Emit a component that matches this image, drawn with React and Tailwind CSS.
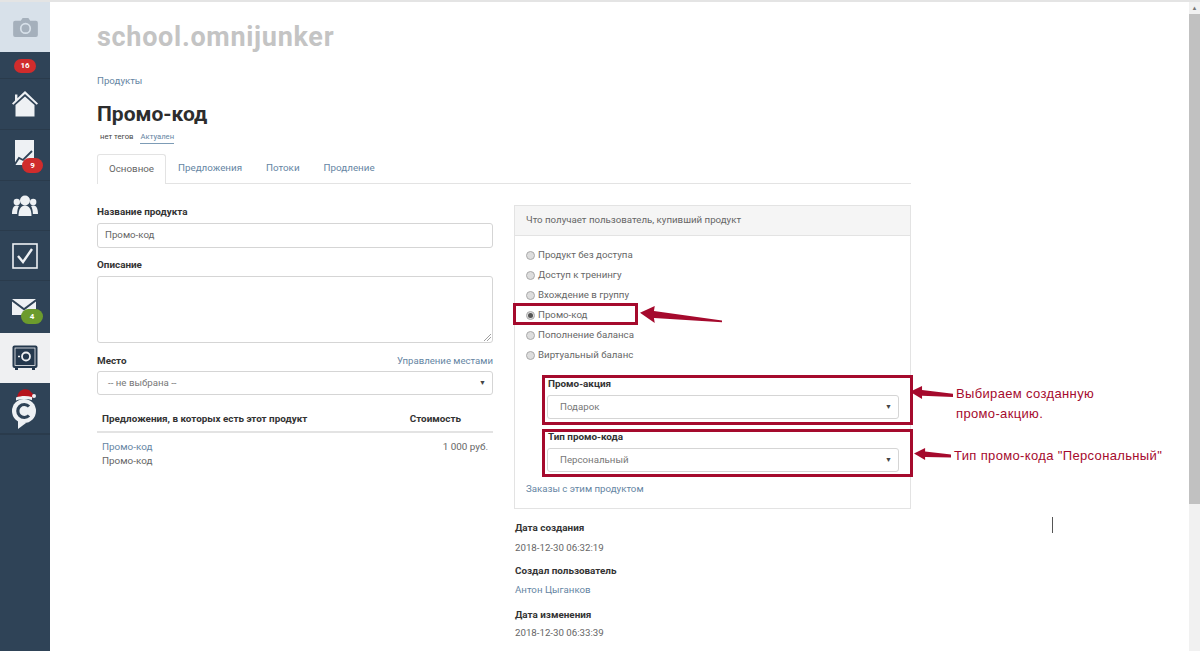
const font = { fontFamily: 'Roboto, "Liberation Sans", sans-serif' };

function Arrow({ className, d }) {
  return (
    <svg className={`absolute ${className}`} viewBox="0 0 100 20" preserveAspectRatio="none" aria-hidden="true">
      <path d={d} fill="#a50a2d" />
    </svg>
  );
}

function Badge({ children, className }) {
  return (
    <span className={`absolute flex items-center justify-center rounded-full text-[8px] font-bold text-white ${className}`}>{children}</span>
  );
}

function NavCell({ className = "", children }) {
  return <div className={`relative flex items-center justify-center border-b border-[#2a3b4c] ${className}`}>{children}</div>;
}

function Sidebar() {
  return (
    <aside className="flex w-[50px] shrink-0 flex-col bg-[#2f4357]">
      <NavCell className="h-[52px] border-b-0 bg-[#d8e1ea]">
        <svg width="25" height="19" viewBox="0 0 26 20" className="translate-y-[1px]"><path fill="#a5b0bc" d="M2 3h6l2-3h6l2 3h6a2 2 0 0 1 2 2v13a2 2 0 0 1-2 2H2a2 2 0 0 1-2-2V5a2 2 0 0 1 2-2z" /><circle cx="13" cy="11" r="5" fill="none" stroke="#d8e1ea" strokeWidth="1.8" /></svg>
      </NavCell>
      <NavCell className="h-[27px]">
        <Badge className="left-[14px] top-[7px] h-[14px] w-[22px] bg-[#d02c2c]">16</Badge>
      </NavCell>
      <NavCell className="h-[51px]">
        <svg width="26" height="26" viewBox="0 0 26 26"><path fill="#eef1f4" d="M13 0 26 12.5l-1.3 1.3L13 3 1.3 13.8 0 12.5 3 9.6V3.5h2.4v3.8z" /><path fill="#eef1f4" d="M13 5.5 22.5 14v11.5h-19V14z" /></svg>
      </NavCell>
      <NavCell className="h-[51px]">
        <svg width="24" height="30" viewBox="0 0 24 30" className="-translate-x-[1px]"><path fill="#eef1f4" d="M3 0h19v25H3z" /><path d="M1 27 7 18l4 2 9-9" fill="none" stroke="#2f4357" strokeWidth="1.8" /></svg>
        <Badge className="left-[22px] top-[28px] h-[15px] w-[21px] bg-[#d02c2c]">9</Badge>
      </NavCell>
      <NavCell className="h-[50px]">
        <svg width="26" height="22" viewBox="0 0 26 22"><g fill="#eef1f4"><circle cx="13" cy="5.5" r="5" /><path d="M6.5 21c0-7 2.5-10.5 6.500-10.500S19.500 14 19.500 21z" /><circle cx="4.800" cy="7" r="3.200" /><path d="M0 19c0-6 1.800-8.500 4.800-8.500 1 0 1.700.2 2.200.6C5.800 13 5.200 15.800 5.100 19z" /><circle cx="21.200" cy="7" r="3.200" /><path d="M26 19c0-6-1.800-8.500-4.800-8.500-1 0-1.700.2-2.200.6 1.200 1.900 1.800 4.700 1.900 7.900z" /></g></svg>
      </NavCell>
      <NavCell className="h-[50px]">
        <svg width="26" height="26" viewBox="0 0 26 26"><rect x="1" y="1" width="24" height="24" fill="none" stroke="#eef1f4" strokeWidth="1.600" /><path d="m6 13 5 6 9-13" fill="none" stroke="#eef1f4" strokeWidth="2.400" /></svg>
      </NavCell>
      <NavCell className="h-[52px] border-b-0">
        <svg width="24" height="16" viewBox="0 0 24 16" className="-translate-x-[1px]"><path fill="#eef1f4" d="M0 0h24L12 9z" /><path fill="#eef1f4" d="M0 2.500 12 11.500 24 2.500V16H0z" /></svg>
        <Badge className="left-[21px] top-[28px] h-[15px] w-[22px] bg-[#6c9b2d]">4</Badge>
      </NavCell>
      <NavCell className="h-[50px] border-b-0 bg-[#eff0f2]">
        <svg width="26" height="26" viewBox="0 0 26 26"><rect x="0.500" y="0.500" width="25" height="22.500" rx="2" fill="#24384d" /><rect x="3" y="3" width="20" height="17.500" fill="none" stroke="#eff0f2" strokeWidth="0.800" /><circle cx="14" cy="11.500" r="4" fill="none" stroke="#eff0f2" strokeWidth="1.800" /><path d="M6 11.500h2" stroke="#eff0f2" strokeWidth="1.500" /><path d="M3 23h3v2H3zM20 23h3v2h-3z" fill="#24384d" /></svg>
      </NavCell>
      <NavCell className="h-[51px]">
        <svg width="26" height="46" viewBox="0 0 26 46"><circle cx="12" cy="26" r="12" fill="#eef1f4" /><path d="M6 35v9l8-6z" fill="#eef1f4" /><path d="M17 21.500a6.500 6.500 0 1 0 0 9" fill="none" stroke="#2f4357" strokeWidth="3.200" /><path d="M5 13C6 5 12 3 17 5l5 5-2 4z" fill="#b5121b" /><path d="M4 12.500c5-2 11-2 16-.5v3c-5-1.500-11-1.500-16 .5z" fill="#eef1f4" /><circle cx="22" cy="11" r="2" fill="#eef1f4" /></svg>
      </NavCell>
      <div className="flex-1 border-t border-[#2a3b4c]" />
    </aside>
  );
}

function Label({ children, className = "" }) {
  return <div className={`text-[9.900px] font-bold leading-[14px] text-[#333] ${className}`}>{children}</div>;
}

function SelectBox({ value, className = "", padClass = "pl-[12px]" }) {
  return (
    <div className={`flex h-[24px] items-center justify-between rounded-[3px] border border-[#d5d5d5] bg-white pr-[6px] text-[9.700px] text-[#777] ${padClass} ${className}`}>
      <span>{value}</span>
      <span className="text-[7px] text-[#444]">▼</span>
    </div>
  );
}

function Radio({ label, checked }) {
  return (
    <div className="flex h-[20px] items-center gap-[3px] text-[9.700px] text-[#666]">
      <span className="flex h-[9px] w-[9px] items-center justify-center rounded-full border border-[#aaa] bg-[#ddd]">
        {checked && <span className="h-[5px] w-[5px] rounded-full bg-[#555]" />}
      </span>
      <span>{label}</span>
    </div>
  );
}

function LeftColumn() {
  return (
    <div className="w-[396px]">
      <Label>Название продукта</Label>
      <div className="mt-[4px] flex h-[25px] items-center rounded-[3px] border border-[#d5d5d5] pl-[7px] text-[9.700px] text-[#666]">Промо-код</div>
      <Label className="mt-[10px]">Описание</Label>
      <div className="relative mt-[4px] h-[67px] rounded-[3px] border border-[#d5d5d5]">
        <svg className="absolute bottom-[1px] right-[1px]" width="7" height="7" viewBox="0 0 7 7"><path d="M7 0 0 7M7 3 3 7" stroke="#888" strokeWidth="0.800" /></svg>
      </div>
      <div className="mt-[11px] flex items-center justify-between">
        <Label>Место</Label>
        <span className="text-[9.600px] text-[#6585a3]">Управление местами</span>
      </div>
      <SelectBox value="-- не выбрана --" padClass="pl-[10px]" className="mt-[3px]" />
      <div className="mt-[17px] flex justify-between border-b-2 border-[#e3e3e3] px-[5px] pb-[5px]">
        <Label>Предложения, в которых есть этот продукт</Label>
        <Label className="mr-[27px]">Стоимость</Label>
      </div>
      <div className="flex justify-between px-[5px] pt-[7px] text-[9.900px] leading-[14px]">
        <div>
          <div className="text-[#6585a3]">Промо-код</div>
          <div className="text-[#666]">Промо-код</div>
        </div>
        <div className="text-[#666]">1 000 руб.</div>
      </div>
    </div>
  );
}

function RightColumn() {
  return (
    <div className="w-[397px]">
      <div className="border border-[#e3e3e3]">
        <div className="flex h-[30px] items-center border-b border-[#e3e3e3] bg-[#f5f5f5] pl-[11px] text-[9.700px] text-[#666]">Что получает пользователь, купивший продукт</div>
        <div className="pl-[11px] pr-[12px] pb-[12px] pt-[9px]">
          <Radio label="Продукт без доступа" />
          <Radio label="Доступ к тренингу" />
          <Radio label="Вхождение в группу" />
          <Radio label="Промо-код" checked />
          <Radio label="Пополнение баланса" />
          <Radio label="Виртуальный баланс" />
          <div className="ml-[21px] mr-[-1px] mt-[11px] pt-[1px]">
            <Label className="pl-[1px]">Промо-акция</Label>
            <SelectBox value="Подарок" className="mt-[4px]" />
            <Label className="mt-[11px] pl-[1px]">Тип промо-кода</Label>
            <SelectBox value="Персональный" className="mt-[4px]" />
          </div>
          <div className="mt-[10px] text-[9.700px] leading-[14px] text-[#6585a3]">Заказы с этим продуктом</div>
        </div>
      </div>
      <div className="mt-[12px] pl-[1px] text-[9.700px] leading-[14px]">
        <Label>Дата создания</Label>
        <div className="mt-[6px] text-[#666]">2018-12-30 06:32:19</div>
        <Label className="mt-[9px]">Создал пользователь</Label>
        <div className="mt-[5px] text-[#6585a3]">Антон Цыганков</div>
        <Label className="mt-[11px]">Дата изменения</Label>
        <div className="mt-[4px] text-[#666]">2018-12-30 06:33:39</div>
      </div>
    </div>
  );
}

export default function App() {
  return (
    <div style={font} className="relative flex h-[651px] w-[1200px] overflow-hidden bg-white">
      <div className="absolute left-0 top-0 z-10 h-[2px] w-full bg-[#e4e4e4]" />
      <Sidebar />
      <main className="box-content w-[814px] pl-[47px]">
        <div className="pt-[21px] text-[27px] font-bold leading-[32px] tracking-[0.700px] text-[#c4c4c4]">school.omnijunker</div>
        <div className="mt-[21px] text-[9.700px] leading-[14px] text-[#6585a3]">Продукты</div>
        <h1 className="mt-[13px] text-[21px] font-bold leading-[26px] text-[#2d2d2d]">Промо-код</h1>
        <div className="mt-[4px] flex pl-[3px] text-[7.700px] leading-[12px]">
          <span className="text-[#444]">нет тегов</span>
          <span className="ml-[7px] border-b border-[#7d9cb6] text-[#6585a3]">Актуален</span>
        </div>
        <nav className="mt-[10px] flex h-[30px] items-stretch border-b border-[#e3e3e3] text-[9.800px] text-[#6585a3]">
          <span className="-mb-[1px] flex w-[69px] items-center justify-center rounded-t-[3px] border border-b-0 border-[#e3e3e3] bg-white text-[#666]">Основное</span>
          <span className="flex items-center pl-[12px]">Предложения</span>
          <span className="flex items-center pl-[24px]">Потоки</span>
          <span className="flex items-center pl-[24px]">Продление</span>
        </nav>
        <div className="mt-[21px] flex items-start justify-between">
          <LeftColumn />
          <RightColumn />
        </div>
      </main>

      <div className="absolute left-[513px] top-[303px] h-[22px] w-[125px] border-[3px] border-[#a50a2d]" />
      <div className="absolute left-[542px] top-[375px] h-[50px] w-[371px] border-[3px] border-[#a50a2d]" />
      <div className="absolute left-[542px] top-[429px] h-[48px] w-[371px] border-[3px] border-[#a50a2d]" />
      <Arrow className="left-[640px] top-[306px] h-[17px] w-[82px]" d="M0 8 18 0 17 6 100 17 100 19 17 14 18 20z" />
      <Arrow className="left-[910px] top-[386px] h-[13px] w-[43px]" d="M0 9 28 0 28 6 100 12 100 17 28 15 28 20z" />
      <Arrow className="left-[914px] top-[448px] h-[12px] w-[37px]" d="M0 9 30 0 30 6 100 11 100 16 30 15 30 20z" />
      <div className="absolute left-[956px] top-[384px] text-[13px] leading-[20px] tracking-[0.350px] text-[#a50a2d]" style={{ fontFamily: '"Liberation Sans", sans-serif' }}>Выбираем созданную<br />промо-акцию.</div>
      <div className="absolute left-[954px] top-[447px] text-[13px] leading-[18px] tracking-[0.350px] text-[#a50a2d]" style={{ fontFamily: '"Liberation Sans", sans-serif' }}>Тип промо-кода "Персональный"</div>
      <div className="absolute left-[1052px] top-[517px] h-[16px] w-[1px] bg-[#555]" />

      <div className="absolute right-0 top-0 h-full w-[11px] bg-[#f1f1f1]">
        <div className="flex h-[14px] items-center justify-center pt-[2px] text-[6px] leading-none text-[#777]">▲</div>
        <div className="h-[490px] w-full bg-[#c1c1c1]" />
      </div>
    </div>
  );
}
